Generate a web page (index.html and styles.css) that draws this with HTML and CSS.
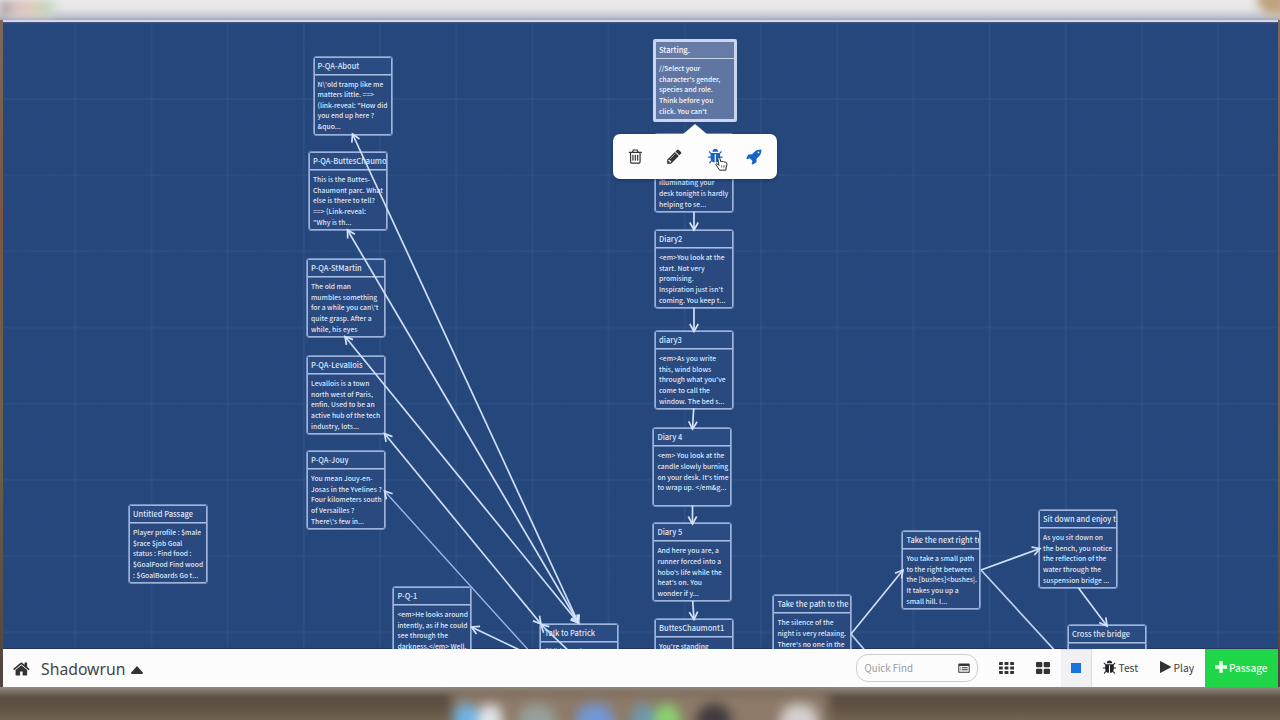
FILE: index.html
```html
<!DOCTYPE html>
<html lang="en">
<head>
<meta charset="utf-8">
<title>Shadowrun</title>
<link rel="stylesheet" href="styles.css">
</head>
<body>
<svg class="defs" aria-hidden="true">
  <symbol id="bug" viewBox="0 0 1792 1792"><path d="M1696 960q0 26-19 45t-45 19h-224q0 171-67 290l208 209q19 19 19 45t-19 45q-18 19-45 19t-45-19l-198-197q-5 5-15 13t-42 28.500-65 36.500-82 29-97 13v-896h-128v896q-51 0-101.500-13.500t-87-33-66-39-43.500-32.500l-15-14-183 207q-20 21-48 21-24 0-43-16-19-18-20.500-44.500t15.500-46.500l202-227q-58-114-58-274h-224q-26 0-45-19t-19-45 19-45 45-19h224v-294l-173-173q-19-19-19-45t19-45 45-19 45 19l173 173h844l173-173q19-19 45-19t45 19 19 45-19 45l-173 173v294h224q26 0 45 19t19 45zm-480-576h-640q0-133 93.500-226.500t226.500-93.500 226.500 93.500 93.500 226.500z"/></symbol>
</svg>
<div class="desktop">
  <header class="titlebar"><span class="lights"></span><span class="corner"></span></header>
  <div class="window">
    <main class="canvas">
      <article class="passage about"><h2>P-QA-About</h2><p>N\'old tramp like me
matters little. ==&gt;
(link-reveal: "How did
you end up here ?
&amp;quo...</p></article>
      <article class="passage chaumont"><h2>P-QA-ButtesChaumo</h2><p>This is the Buttes-
Chaumont parc. What
else is there to tell?
==&gt; (Link-reveal:
"Why is th...</p></article>
      <article class="passage martin"><h2>P-QA-StMartin</h2><p>The old man
mumbles something
for a while you can\'t
quite grasp. After a
while, his eyes</p></article>
      <article class="passage levallois"><h2>P-QA-Levallois</h2><p>Levallois is a town
north west of Paris,
enfin. Used to be an
active hub of the tech
industry, lots...</p></article>
      <article class="passage jouy"><h2>P-QA-Jouy</h2><p>You mean Jouy-en-
Josas in the Yvelines ?
Four kilometers south
of Versailles ?
There\'s few in...</p></article>
      <article class="passage untitled"><h2>Untitled Passage</h2><p>Player profile : $male
$race $job Goal
status : Find food :
$GoalFood Find wood
: $GoalBoards Go t...</p></article>
      <article class="passage pq1"><h2>P-Q-1</h2><p>&lt;em&gt;He looks around
intently, as if he could
see through the
darkness.&lt;/em&gt; Well,</p></article>
      <article class="passage talk"><h2>Talk to Patrick</h2><p>(if:(history:) cont</p></article>
      <article class="passage diary1"><h2></h2><p>

illuminating your
desk tonight is hardly
helping to se...</p></article>
      <article class="passage diary2"><h2>Diary2</h2><p>&lt;em&gt;You look at the
start. Not very
promising.
Inspiration just isn't
coming. You keep t...</p></article>
      <article class="passage diary3"><h2>diary3</h2><p>&lt;em&gt;As you write
this, wind blows
through what you've
come to call the
window. The bed s...</p></article>
      <article class="passage diary4"><h2>Diary 4</h2><p>&lt;em&gt; You look at the
candle slowly burning
on your desk. It's time
to wrap up. &lt;/em&amp;g...</p></article>
      <article class="passage diary5"><h2>Diary 5</h2><p>And here you are, a
runner forced into a
hobo's life while the
heat's on. You
wonder if y...</p></article>
      <article class="passage buttes1"><h2>ButtesChaumont1</h2><p>You're standing</p></article>
      <article class="passage path"><h2>Take the path to the</h2><p>The silence of the
night is very relaxing.
There's no one in the</p></article>
      <article class="passage right"><h2>Take the next right tu</h2><p>You take a small path
to the right between
the [bushes]&lt;bushes|.
It takes you up a
small hill. I...</p></article>
      <article class="passage sit"><h2>Sit down and enjoy th</h2><p>As you sit down on
the bench, you notice
the reflection of the
water through the
suspension bridge ...</p></article>
      <article class="passage cross"><h2>Cross the bridge</h2><p></p></article>

      <svg class="links" viewBox="3 23 1275 626">
        <defs>
          <marker id="head" viewBox="-10 -6 12 12" markerWidth="12" markerHeight="12" markerUnits="userSpaceOnUse" orient="auto-start-reverse"><path d="M-7.500-4.200 0 0-7.500 4.200" fill="none" stroke="#d3e2fb" stroke-width="1.700"/></marker>
        </defs>
        <g class="both">
          <path d="M352.500 134 578.500 623"/><path d="M347.500 230 578.500 623"/><path d="M345 336.500 578.500 623"/><path d="M384.500 433.500 541 624"/>
        </g>
        <g class="one">
          <path class="dim" d="M532 654 384.500 491"/><path d="M572 654 541 624.500"/><path d="M526 653 471.500 627"/>
          <path d="M694 212v18"/><path d="M694 307.500v24"/><path d="M693.700 408 692.500 429"/>
          <path d="M692.500 505.500v18.500"/><path d="M692.700 601 694 619.500"/>
          <path d="M851 634 903 570"/><path d="M981 570 1040 548.500"/><path d="M1078.500 588 1107 626"/>
        </g>
        <g class="plain"><path d="M851 634 868 654"/><path d="M981 570 1058 654"/></g>
      </svg>

      <article class="passage starting selected"><h2>Starting.</h2><p>//Select your
character's gender,
species and role.
Think before you
click. You can't</p></article>

      <div class="popup">
        <svg class="ico" viewBox="0 0 1792 1792"><path d="M704 736v576q0 14-9 23t-23 9h-64q-14 0-23-9t-9-23v-576q0-14 9-23t23-9h64q14 0 23 9t9 23zm256 0v576q0 14-9 23t-23 9h-64q-14 0-23-9t-9-23v-576q0-14 9-23t23-9h64q14 0 23 9t9 23zm256 0v576q0 14-9 23t-23 9h-64q-14 0-23-9t-9-23v-576q0-14 9-23t23-9h64q14 0 23 9t9 23zm128 724v-948h-896v948q0 22 7 40.500t14.500 27 10.500 8.500h832q3 0 10.500-8.500t14.500-27 7-40.500zm-672-1076h448l-48-117q-7-9-17-11h-317q-10 2-17 11zm928 32v64q0 14-9 23t-23 9h-96v948q0 83-47 143.500t-113 60.500h-832q-66 0-113-58.500t-47-141.500v-952h-96q-14 0-23-9t-9-23v-64q0-14 9-23t23-9h309l70-167q15-37 54-63t79-26h320q40 0 79 26t54 63l70 167h309q14 0 23 9t9 23z"/></svg>
        <svg class="ico pencil" viewBox="0 0 1792 1792"><path d="M491 1536l91-91-235-235-91 91v107h128v128h107zm523-928q0-22-22-22-10 0-17 7l-542 542q-7 7-7 17 0 22 22 22 10 0 17-7l542-542q7-7 7-17zm-54-192l416 416-832 832h-416v-416zm683 96q0 53-37 90l-166 166-416-416 166-165q36-38 90-38 53 0 91 38l235 234q37 39 37 91z"/></svg>
        <svg class="ico blue bugico"><use href="#bug"/></svg>
        <svg class="ico blue rocket" viewBox="0 0 1792 1792"><path d="M1440 448q0-40-28-68t-68-28-68 28-28 68 28 68 68 28 68-28 28-68zm224-288q0 249-75.500 430.500t-253.500 360.500q-81 80-195 176l-20 379q-2 16-16 26l-384 224q-7 4-16 4-12 0-23-9l-64-64q-13-14-8-32l85-276-281-281-276 85q-3 1-9 1-14 0-23-9l-64-64q-17-19-5-39l224-384q10-14 26-16l379-20q96-114 176-195 188-187 358-258t431-71q14 0 24 9.500t10 22.500z"/></svg>
      </div>
      <svg class="cursor" viewBox="0 0 12 14"><path d="M4.200 13.200 1 8.500C.3 7.400 1.600 6.700 2.400 7.600l1.200 1.200L2.500 2.300C2.300.9 4 .7 4.400 2l1 3.500c.2-.8 1.700-.8 1.900.1.500-.7 1.600-.5 1.800.4.700-.5 1.700 0 1.800.8.300 2-.2 3.400-.7 4.400v2z" fill="#fff" stroke="#222" stroke-width=".9"/><path d="M6 8.500v2.500M7.700 8.500v2.500M9.200 8.500v2.500" stroke="#555" stroke-width=".6"/></svg>
    </main>

    <footer class="toolbar">
      <svg class="home" viewBox="0 0 1792 1792"><path d="M1408 992v480q0 26-19 45t-45 19h-384v-384h-256v384h-384q-26 0-45-19t-19-45v-480q0-1 .5-3t.5-3l575-474 575 474q1 2 1 6zm223-69l-62 74q-8 9-21 11h-3q-13 0-21-7l-692-577-692 577q-12 8-24 7-13-2-21-11l-62-74q-8-10-7-23.500t11-21.500l719-599q32-26 76-26t76 26l244 204v-195q0-14 9-23t23-9h192q14 0 23 9t9 23v408l219 182q10 8 11 21.500t-7 23.500z"/></svg>
      <span class="story">Shadowrun</span>
      <svg class="caret" viewBox="0 0 12 8"><path d="M6 0 12 6.800Q12 8 11 8H1Q0 8 0 6.800z"/></svg>
      <div class="find"><span>Quick Find</span>
        <svg viewBox="0 0 12 10"><path fill-rule="evenodd" d="M1 .5h10q.7 0 .7.700v8q0 .6-.7.600H1q-.7 0-.7-.6v-8Q.3.500 1 .5zM1.300 3v5.700h9.400V3zM2.300 4.200h1v1h-1zM4 4.200h5.700v1H4zM2.300 6.300h1v1h-1zM4 6.300h5.700v1H4z"/></svg>
      </div>
      <div class="zoom">
        <svg class="g3" viewBox="0 0 15 12"><path d="M.7 0h3.100v3.100H0V.7zM5.600 0h3.800v3.100H5.600zM11.200 0h3.100l.7.700v2.400h-3.800zM0 4.400h3.800v3.100H0zM5.600 4.400h3.800v3.100H5.600zM11.200 4.400H15v3.100h-3.800zM0 8.900h3.800V12H.7L0 11.300zM5.600 8.900h3.800V12H5.600zM11.200 8.900H15v2.400l-.7.700h-3.100z"/></svg>
      </div>
      <div class="zoom">
        <svg class="g2" viewBox="0 0 14 12"><rect width="6.300" height="5.300" rx="1"/><rect x="7.700" width="6.300" height="5.300" rx="1"/><rect y="6.700" width="6.300" height="5.300" rx="1"/><rect x="7.700" y="6.700" width="6.300" height="5.300" rx="1"/></svg>
      </div>
      <div class="zoom active"><i></i></div>
      <div class="btn test"><svg class="small"><use href="#bug"/></svg>Test</div>
      <div class="btn play"><svg class="tri" viewBox="0 0 11 12"><path d="M0 .5Q0-.2.700.2l10 5.400q.6.400 0 .8l-10 5.400Q0 12.200 0 11.500z"/></svg>Play</div>
      <div class="btn add"><svg class="plus" viewBox="0 0 11 11"><path d="M3.900 0h3.200v3.900H11v3.200H7.100V11H3.900V7.100H0V3.900h3.900z"/></svg>Passage</div>
    </footer>
  </div>
  <div class="dock">
    <div class="apps"><i class="finder"></i><i class="white"></i><i class="grey"></i><i class="azure"></i><i class="teal"></i><i class="green"></i><i class="dark"></i><i class="bin"></i></div>
  </div>
</div>
</body>
</html>
```
FILE: styles.css
```css
* { box-sizing: border-box; }
body {
  margin: 0;
  font-family: "Noto Sans CJK SC", "Noto Sans", sans-serif;
  color: #333;
}
.defs { position: absolute; width: 0; height: 0; }
.desktop {
  width: 1280px;
  height: 720px;
  overflow: hidden;
  display: flex;
  flex-direction: column;
  background: linear-gradient(#7d6a5e, #7b5540 30%, #6d6346 60%, #4e3f42);
}
.titlebar {
  height: 20px;
  flex: none;
  overflow: hidden;
  display: flex;
  justify-content: space-between;
  background: linear-gradient(#ebebec, #e4e4e7 45%, #c5c8d2 80%, #a0aac0);
}
.lights {
  width: 70px;
  height: 17px;
  background: linear-gradient(90deg, #a4979b, #d2c3c3 14px, #e0c4bd 24px, #dbcfb9 34px, #c3d3bb 46px, transparent 60px);
  filter: blur(4px);
}
.corner {
  width: 30px;
  height: 30px;
  margin: -15px -7px 0 0;
  border-radius: 0 0 0 16px;
  background: #c0a482;
  filter: blur(4px);
}
.window {
  height: 667px;
  flex: none;
  margin: 0 2px 0 3px;
  display: flex;
  flex-direction: column;
  border-top: 2px solid #d9d8e2;
}
.canvas {
  position: relative;
  height: 627px;
  flex: none;
  overflow: hidden;
  background-color: #26477c;
  background-image:
    linear-gradient(#34568866 1.5px, transparent 1.5px),
    linear-gradient(90deg, #34568877 1.5px, transparent 1.5px),
    linear-gradient(#2c4d811f 1px, transparent 1px),
    linear-gradient(90deg, #2c4d811f 1px, transparent 1px);
  background-size: 76.200px 76.200px, 76.200px 76.200px, 19.050px 19.050px, 19.050px 19.050px;
  background-position: 71.300px 76px, 71.300px 76px, 71.300px 76px, 71.300px 76px;
  box-shadow: inset 0 1px 1px #4a5a8c, inset 0 -1px 1px #26325c;
}
.links {
  position: absolute;
  left: 0;
  top: 1px;
  width: 1275px;
  height: 626px;
  fill: none;
  stroke: #cfdff9;
  stroke-width: 1.700;
}
.both path { marker-start: url(#head); marker-end: url(#head); }
.one path { marker-end: url(#head); }
.links .dim { stroke: #9db7e6; stroke-width: 1.400; }
.plain { stroke: #bfd2f4; }
.passage {
  position: absolute;
  width: 78px;
  height: 78px;
  overflow: hidden;
  border: 1px solid #9fb4dc;
  outline: .5px solid #7690c0;
  border-radius: 2px;
  background: #29497f;
  color: #dbe5f9;
}
.passage h2 {
  margin: 0;
  height: 17px;
  padding-left: 3px;
  border-bottom: 1.500px solid #a9bee4;
  box-shadow: 0 1px 0 #6f8abb;
  background: #2b4c82;
  font-size: 7.500px;
  font-weight: 500;
  line-height: 15px;
  white-space: nowrap;
  overflow: hidden;
}
.passage p {
  margin: 0;
  padding: 4px 0 0 3px;
  font-size: 6.750px;
  font-weight: 500;
  line-height: 10.650px;
  white-space: pre;
}
/* canvas coordinates of each passage */
.about { left: 310.500px; top: 34.500px; }
.chaumont { left: 306px; top: 130px; }
.martin { left: 304px; top: 237px; }
.levallois { left: 304px; top: 334px; }
.jouy { left: 304px; top: 429px; }
.untitled { left: 126px; top: 483px; }
.pq1 { left: 390.400px; top: 565px; }
.talk { left: 537.400px; top: 601.500px; }
.diary1 { left: 652px; top: 112px; }
.diary2 { left: 652px; top: 208px; }
.diary3 { left: 652px; top: 309px; }
.diary4 { left: 650.400px; top: 406.400px; }
.diary5 { left: 650.400px; top: 501.400px; }
.buttes1 { left: 652px; top: 597px; }
.path { left: 770.400px; top: 573.400px; }
.right { left: 899.400px; top: 509px; }
.sit { left: 1036px; top: 488px; }
.cross { left: 1065px; top: 603px; }
.starting { left: 649.500px; top: 16.500px; }
.selected {
  width: 84px;
  height: 83px;
  padding: .5px 0 0 .5px;
  border: 3px solid #cbd6ee;
  outline: 0;
  background: #5f76a3;
  color: #f4f7ff;
}
.selected h2 { background: #667ca7; border-color: #cbd6ee; box-shadow: none; }
.popup {
  position: absolute;
  left: 610px;
  top: 112px;
  width: 164px;
  height: 44.500px;
  padding: 0 14px;
  display: flex;
  align-items: center;
  background: #fdfdfe;
  border-radius: 7px;
  box-shadow: 0 1px 3px #10234c99;
}
.popup::before {
  content: "";
  position: absolute;
  left: 69px;
  top: -10.500px;
  border: 13px solid transparent;
  border-top: 0;
  border-bottom: 11px solid #fdfdfe;
}
.ico { width: 17px; height: 17px; fill: #333; }
.ico.blue { fill: #1763c6; }
.pencil { margin-left: 22px; }
.bugico { margin-left: 25px; }
.rocket { margin-left: 22.500px; }
.cursor { position: absolute; left: 712px; top: 134px; width: 13px; height: 15px; }
.toolbar {
  height: 38px;
  flex: none;
  display: flex;
  align-items: center;
  background: #fcfcfd;
  padding-left: 10px;
}
.home { width: 18px; height: 18px; fill: #333; margin-top: 2px; }
.story {
  width: 84px;
  margin: 1px 0 0 10px;
  font-family: "Noto Sans", sans-serif;
  font-size: 15.750px;
  line-height: 24px;
  color: #444;
}
.caret { width: 12px; height: 8px; margin: 3px 0 0 6px; fill: #333; }
.find {
  width: 122px;
  height: 28px;
  margin-left: auto;
  margin-right: 11px;
  padding: 0 7px 0 7.500px;
  display: flex;
  align-items: center;
  justify-content: space-between;
  border: 1.500px solid #ccc;
  border-radius: 12px;
  font-size: 9.750px;
  color: #999;
}
.find span { margin-top: -1px; }
.find svg { width: 12px; height: 10px; fill: #333; }
.zoom {
  width: 36px;
  height: 38px;
  display: flex;
  align-items: center;
  justify-content: center;
}
.g3 { width: 15px; height: 12px; margin-top: -1px; margin-right: 1px; fill: #333; }
.g2 { width: 14px; height: 12px; margin-top: -1px; margin-right: 1px; fill: #333; }
.active {
  width: 31px;
  background: #f1f1f4;
  border: 1px solid #dddce4;
  border-width: 1px 1px 0 0;
}
.active i { width: 10px; height: 10px; margin-top: -2px; background: #1673df; }
.btn {
  height: 38px;
  padding-bottom: 2px;
  display: flex;
  align-items: center;
  font-size: 10.300px;
  color: #3c3c3c;
}
.test { width: 57px; padding-left: 10px; }
.small { width: 15px; height: 15px; margin-right: 1.500px; fill: #222; }
.play { width: 56px; padding-left: 11px; }
.tri { width: 11px; height: 12px; margin-right: 2.500px; fill: #333; }
.add {
  width: 73px;
  padding-left: 10px;
  background: #1fd548;
  color: #e8ffed;
  font-size: 10px;
  font-weight: 500;
}
.plus { width: 12px; height: 12px; margin-right: 2px; fill: #e8ffed; }
.dock {
  height: 33px;
  overflow: hidden;
  display: flex;
  justify-content: center;
  background: linear-gradient(#938b82, #5e5144 10px, #5d4f42 18px, #716250);
}
.apps {
  width: 376px;
  height: 50px;
  margin-top: 4px;
  padding-top: 13px;
  display: flex;
  background: #8d7a68;
  filter: blur(6px);
}
.apps i { height: 40px; border-radius: 16px 16px 0 0; }
.finder { width: 24px; margin-left: 2px; background: #6eb4e8; }
.white { width: 24px; background: #e1e5ea; }
.grey { width: 38px; margin-left: 16px; background: #979f99; }
.azure { width: 38px; margin-left: 20px; background: #7397d6; }
.teal { width: 22px; margin-left: 18px; background: #6e98ad; }
.green { width: 26px; background: #8bd270; }
.dark { width: 34px; margin-left: 17px; background: #3f3a3c; }
.bin { width: 38px; margin-left: 49px; background: #d4d0cf; }
```
